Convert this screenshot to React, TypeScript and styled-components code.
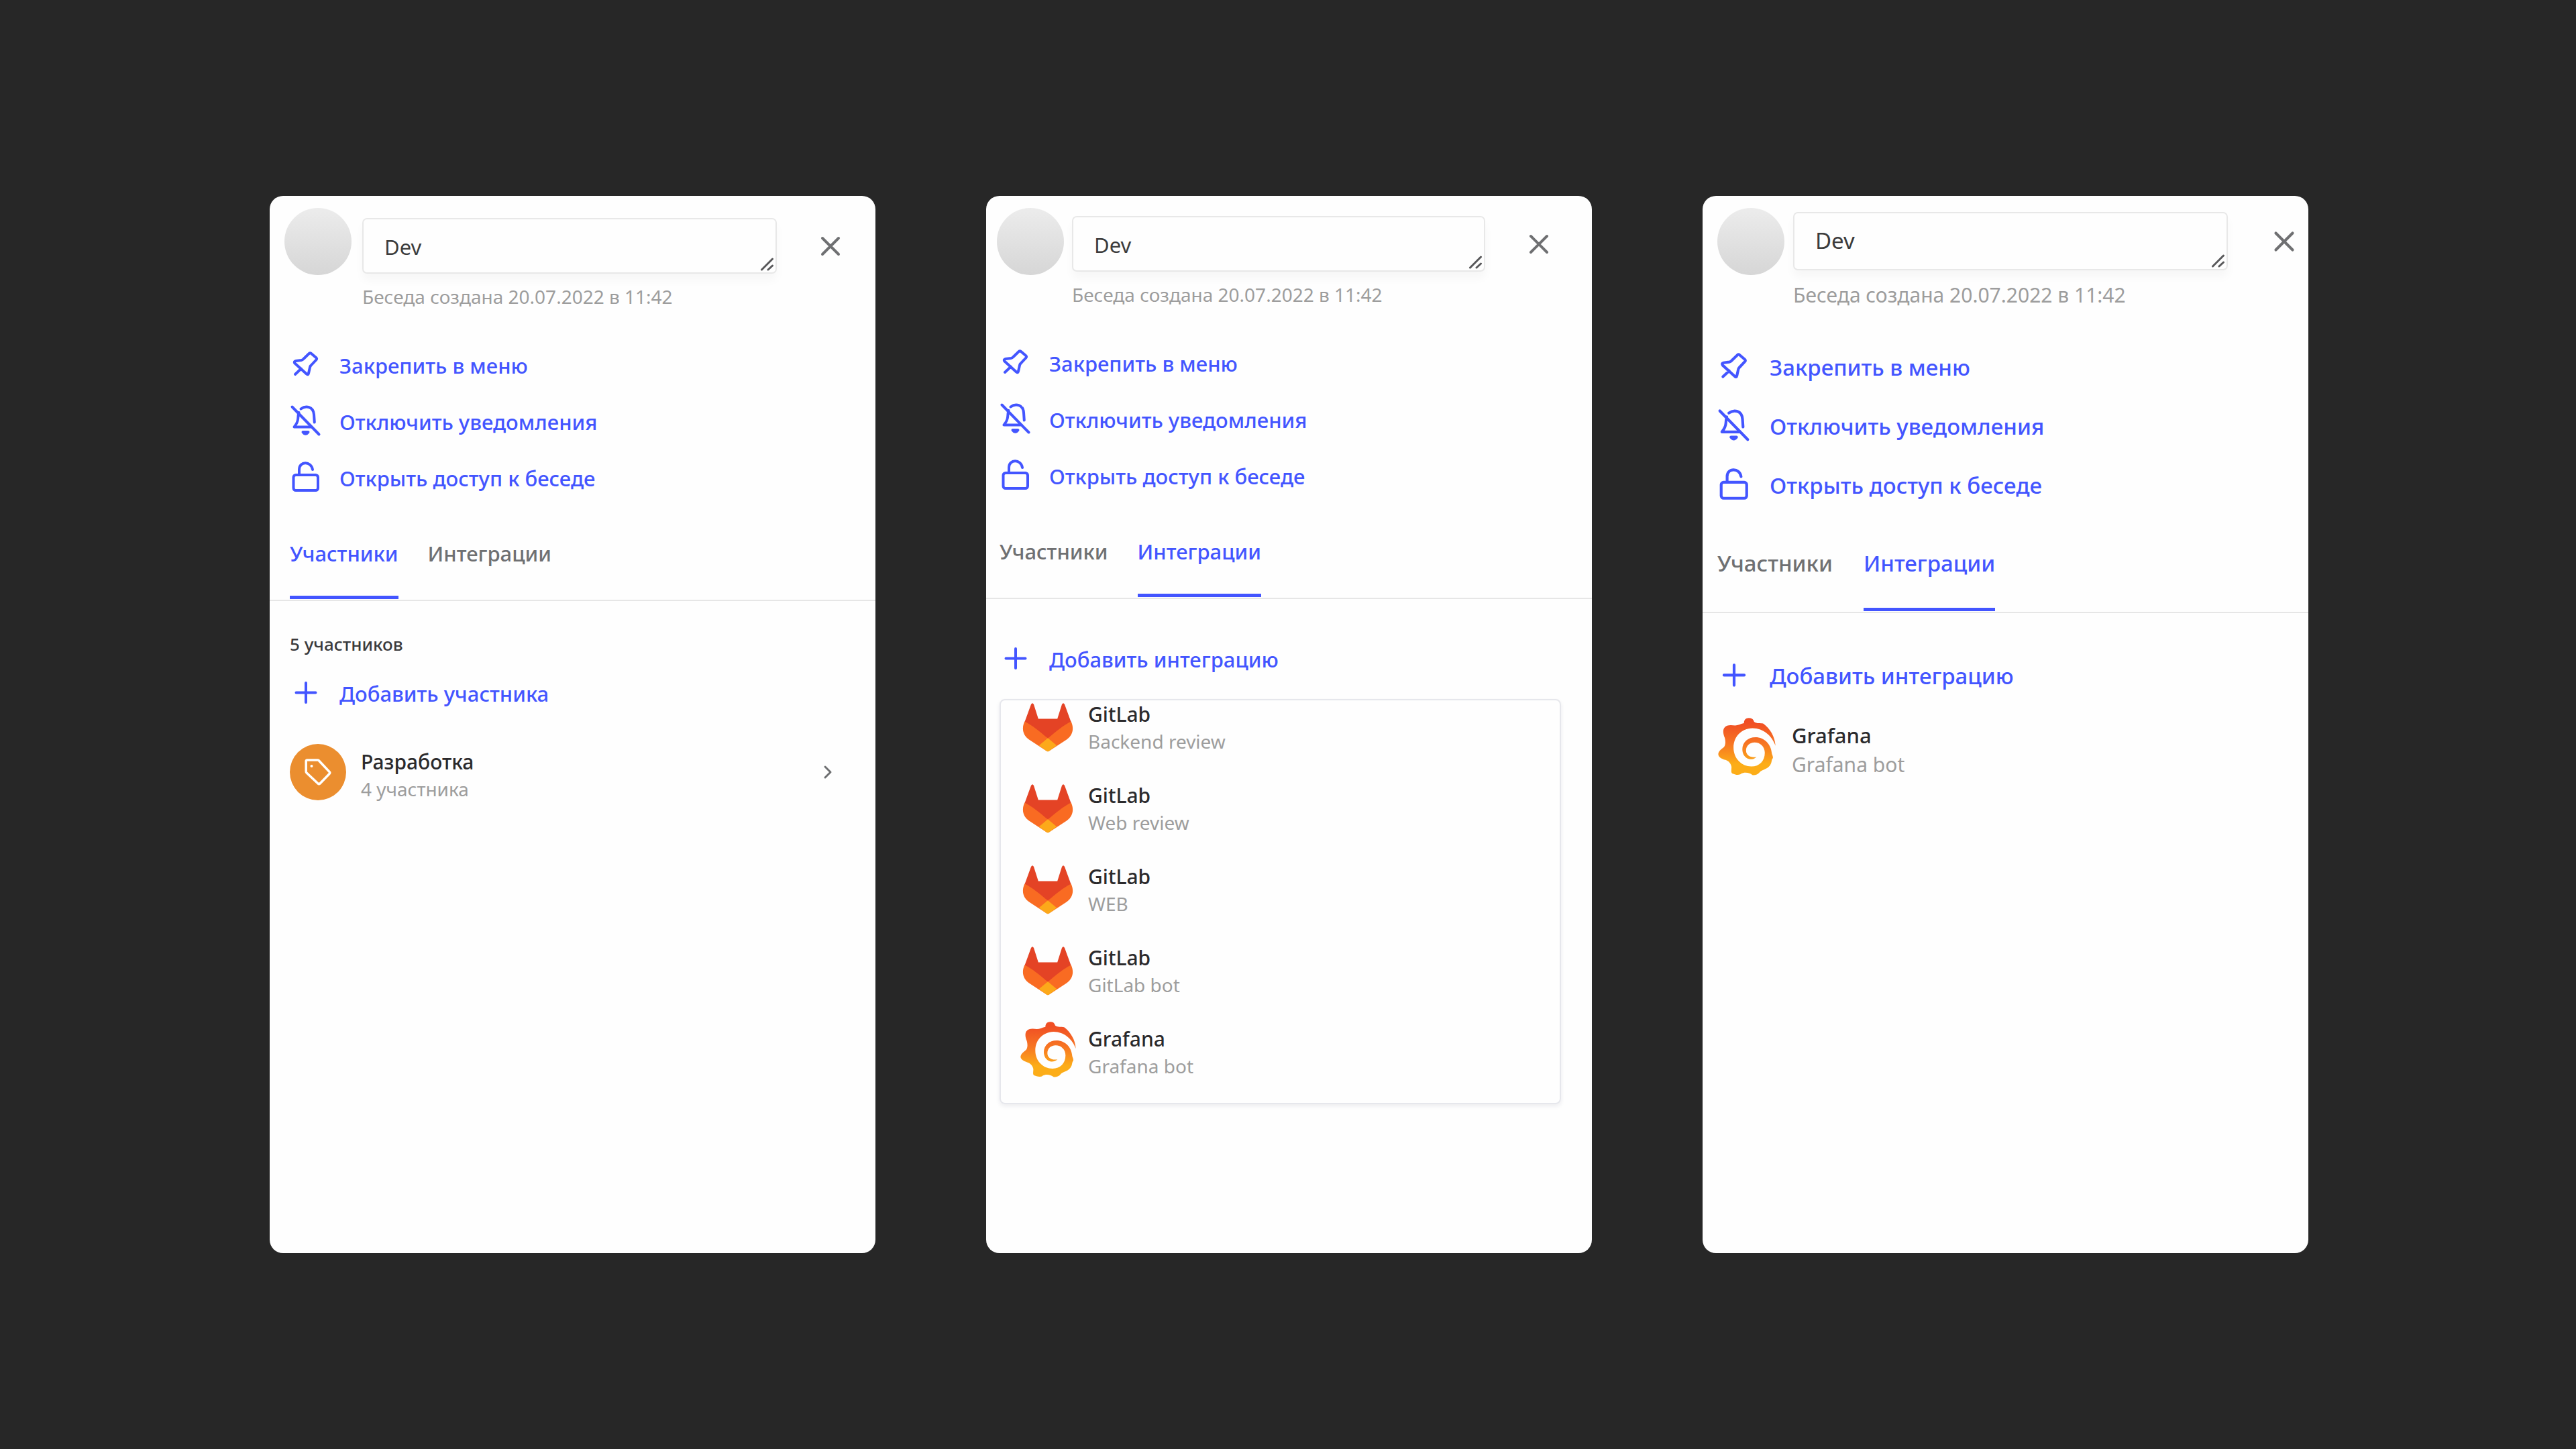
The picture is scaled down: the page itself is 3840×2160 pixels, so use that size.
import React, { useId, useState } from "react";
import styled, { createGlobalStyle, css, ThemeProvider } from "styled-components";

interface Metrics {
  base: number;
  title: number;
  small: number;
  count: number;
  row: number;
  line: number;
  icon: number;
  iconGap: number;
  logo: number;
  logoGap: number;
  inset: number;
  avatarInset: number;
  avatarGap: number;
  fieldTop: number;
  fieldHeight: number;
  closeGap: number;
  closeInset: number;
  dateGap: number;
  actionsTop: number;
  tabGap: number;
  tabTop: number;
  tabBottom: number;
  bodyTop: number;
  addGap: number;
}

declare module "styled-components" {
  export interface DefaultTheme extends Metrics {}
}

const compact: Metrics = {
  base: 31,
  title: 30,
  small: 28,
  count: 26,
  row: 84,
  line: 41,
  icon: 48,
  iconGap: 26,
  logo: 84,
  logoGap: 22,
  inset: 30,
  avatarInset: 22,
  avatarGap: 16,
  fieldTop: 15,
  fieldHeight: 83,
  closeGap: 56,
  closeInset: 43,
  dateGap: 14,
  actionsTop: 41,
  tabGap: 44,
  tabTop: 48,
  tabBottom: 41,
  bodyTop: 44,
  addGap: 39,
};

const withPicker: Metrics = {
  ...compact,
  logoGap: 18,
  inset: 20,
  avatarInset: 16,
  avatarGap: 12,
  fieldTop: 12,
  closeInset: 55,
  bodyTop: 48,
  addGap: 17,
};

const roomy: Metrics = {
  base: 33,
  title: 31,
  small: 30,
  count: 28,
  row: 88,
  line: 43,
  icon: 50,
  iconGap: 28,
  logo: 87,
  logoGap: 24,
  inset: 22,
  avatarInset: 22,
  avatarGap: 13,
  fieldTop: 6,
  fieldHeight: 87,
  closeGap: 59,
  closeInset: 11,
  dateGap: 17,
  actionsTop: 44,
  tabGap: 46,
  tabTop: 50,
  tabBottom: 44,
  bodyTop: 50,
  addGap: 23,
};

const blue = "#4355ff";
const ink = "#2b2a2c";
const grey = "#6f7072";
const pale = "#9d9d9d";

const GlobalStyle = createGlobalStyle`
  *, *::before, *::after { box-sizing: border-box; }
  body {
    margin: 0;
    background: #272727;
    font-family: "Noto Sans", "Open Sans", sans-serif;
  }
  button {
    margin: 0;
    padding: 0;
    border: 0;
    background: none;
    font: inherit;
    color: inherit;
    text-align: left;
    cursor: pointer;
  }
`;

const Page = styled.main`
  display: grid;
  grid-template-columns: repeat(3, minmax(0, 1fr));
  gap: 165px;
  min-height: 100vh;
  padding: 292px 399px 292px 402px;
`;

const Panel = styled.section`
  display: flex;
  flex-direction: column;
  border-radius: 20px;
  background: #fefefe;
`;

const Header = styled.header`
  display: flex;
  align-items: flex-start;
  gap: ${p => p.theme.avatarGap}px;
  padding: 18px ${p => p.theme.closeInset}px 0 ${p => p.theme.avatarInset}px;
`;

const Avatar = styled.div`
  flex: none;
  width: 100px;
  height: 100px;
  border-radius: 50%;
  background: linear-gradient(#ececec, #d6d6d6);
`;

const HeaderBody = styled.div`
  flex: 1;
  min-width: 0;
  padding-top: ${p => p.theme.fieldTop}px;
`;

const NameRow = styled.div`
  display: flex;
  align-items: center;
  gap: ${p => p.theme.closeGap}px;
`;

const Field = styled.div`
  position: relative;
  display: flex;
  flex: 1;
  height: ${p => p.theme.fieldHeight}px;
`;

const NameInput = styled.textarea`
  flex: 1;
  min-width: 0;
  margin: 0;
  padding: 20px 31px;
  border: 2px solid #e8e8e8;
  border-radius: 7px;
  outline: none;
  resize: none;
  overflow: hidden;
  background: #fefefe;
  box-shadow: 0 10px 14px rgba(0, 0, 0, 0.03);
  font: inherit;
  font-size: ${p => p.theme.base}px;
  line-height: 42px;
  color: #3c3c3c;
`;

const Grip = styled.svg`
  position: absolute;
  right: 4px;
  bottom: 4px;
  width: 24px;
  height: 24px;
  fill: none;
  stroke: #58585a;
  stroke-width: 3;
  stroke-linecap: round;
  pointer-events: none;
`;

const strokeIcon = css`
  display: block;
  flex: none;
  fill: none;
  stroke: currentColor;
  stroke-linecap: round;
  stroke-linejoin: round;
  overflow: visible;
`;

const Glyph = styled.svg`
  ${strokeIcon}
  width: ${p => p.theme.icon}px;
  height: ${p => p.theme.icon}px;
  stroke-width: 4;
`;

const CloseButton = styled.button`
  flex: none;
  color: ${grey};
`;

const Created = styled.p`
  margin: ${p => p.theme.dateGap}px 0 0;
  font-size: ${p => p.theme.small}px;
  line-height: 40px;
  color: ${pale};
  white-space: nowrap;
`;

const Actions = styled.div`
  display: flex;
  flex-direction: column;
  margin-top: ${p => p.theme.actionsTop}px;
  padding: 0 ${p => p.theme.inset}px;
`;

const ActionButton = styled.button`
  display: flex;
  align-items: center;
  align-self: flex-start;
  gap: ${p => p.theme.iconGap}px;
  height: ${p => p.theme.row}px;
  font-size: ${p => p.theme.base}px;
  font-weight: 500;
  line-height: 44px;
  color: ${blue};
  white-space: nowrap;
`;

const Tabs = styled.div`
  display: flex;
  gap: ${p => p.theme.tabGap}px;
  padding: ${p => p.theme.tabTop}px ${p => p.theme.inset}px 1px;
  border-bottom: 2px solid #e6e6e6;
`;

const Tab = styled.button<{ $active: boolean }>`
  padding-bottom: ${p => p.theme.tabBottom}px;
  border-bottom: 5px solid ${p => (p.$active ? blue : "transparent")};
  font-size: ${p => p.theme.base}px;
  font-weight: 500;
  line-height: 44px;
  color: ${p => (p.$active ? blue : grey)};
`;

const Body = styled.div`
  display: flex;
  flex-direction: column;
  padding: ${p => p.theme.bodyTop}px ${p => p.theme.inset}px 0;
`;

const Count = styled.p`
  margin: 0 0 12px;
  font-size: ${p => p.theme.count}px;
  font-weight: 500;
  line-height: 40px;
  color: #3a3a3c;
`;

const Entries = styled.ul`
  display: flex;
  flex-direction: column;
  gap: 39px;
  margin: ${p => p.theme.addGap}px 0 0;
  padding: 0;
  list-style: none;
`;

const PickerEntries = styled(Entries)`
  margin-right: 26px;
  padding: 0 28px 34px;
  border: 2px solid #e6e7ec;
  border-radius: 8px;
  box-shadow: 0 3px 6px rgba(20, 20, 60, 0.08);
`;

const EntryButton = styled.button`
  display: flex;
  align-items: flex-start;
  gap: ${p => p.theme.logoGap}px;
  width: 100%;
`;

const LogoSlot = styled.span`
  flex: none;
  width: ${p => p.theme.logo}px;
  height: ${p => p.theme.logo}px;
  margin: -6px 0 -4px;

  svg {
    display: block;
    width: 100%;
    height: 100%;
  }
`;

const GroupBadge = styled(LogoSlot)`
  border-radius: 50%;
  background: #eb8e2f;
  color: #fff;

  svg {
    ${strokeIcon}
    stroke-width: 3.5;
  }
`;

const EntryText = styled.span`
  display: flex;
  flex: 1;
  flex-direction: column;
  line-height: ${p => p.theme.line}px;
`;

const EntryTitle = styled.span`
  font-size: ${p => p.theme.title}px;
  font-weight: 500;
  color: ${ink};
`;

const EntryNote = styled.span`
  font-size: ${p => p.theme.small}px;
  color: ${pale};
`;

const Chevron = styled.svg`
  ${strokeIcon}
  width: 12px;
  height: 20px;
  margin: 26px 35px 0 0;
  stroke-width: 3;
  color: ${grey};
`;

const PinIcon = () => (
  <Glyph viewBox="0 0 48 48" aria-hidden="true">
    <path d="M8 37l9-8.500M7.500 20.500l17.500 16q2.500 2 3-1l2-9q.3-1.500 1.300-2.500l8-8.500q1.700-1.700 0-3.200L32 6q-1.700-1.500-3.300 0L20.500 14q-1.500 1.700-3.500 2l-8 1q-3.500.7-1.500 3.500z" />
  </Glyph>
);

const BellOffIcon = () => (
  <Glyph viewBox="0 0 48 48" aria-hidden="true">
    <path d="M3.500 1.500l40 41M16.500 4.500C24-1 35 1 36 13l.8 11.500M13.500 10q-1 3-1.300 9-.4 6-5.700 12.500H33" />
    <path d="M19.500 39q4 5.500 8 0z" fill="currentColor" />
  </Glyph>
);

const UnlockIcon = () => (
  <Glyph viewBox="0 0 48 48" aria-hidden="true">
    <rect x="5.500" y="19" width="36.500" height="23" rx="3.500" />
    <path d="M14 18.500V11c0-13 18-13 20 0" />
  </Glyph>
);

const PlusIcon = () => (
  <Glyph viewBox="0 0 48 48" aria-hidden="true">
    <path d="M24 8v29M9.500 22.500h29" />
  </Glyph>
);

const CloseIcon = () => (
  <Glyph viewBox="0 0 48 48" aria-hidden="true">
    <path d="M12 12l24 24M36 12L12 36" />
  </Glyph>
);

const TagIcon = () => (
  <svg viewBox="0 0 84 84" aria-hidden="true">
    <path d="M26 24h15.500q1 0 1.800.8L59 41.500q1.500 1.500 0 3L45 59q-1.500 1.500-3 0L25 43q-.8-.8-.8-2V26q0-2 1.800-2z" />
    <circle cx="32.500" cy="33" r="2" fill="currentColor" stroke="none" />
  </svg>
);

const GitLabLogo = () => (
  <svg viewBox="0 0 84 84" aria-hidden="true">
    <path fill="#e44325" d="M7.500 38L17 12q2-3.500 4 0l6.800 21.500h28.400L63 12q2-3.500 4 0l9.500 26L42 74z" />
    <path fill="#f96b22" d="M7.300 37.500C19 43 30 53 42 62.500 54 53 65 43 76.700 37.500c4.500 10 3 20-6.700 27L44 81.500q-2 1.600-4 0L14 64.500c-9.700-7-11.200-17-6.700-27z" />
    <path fill="#fca91a" d="M42 62.200l13.200 11L44 81.500q-2 1.600-4 0L28.800 73.200z" />
  </svg>
);

const GrafanaLogo = () => {
  const id = "grafana-" + useId().replace(/[^a-zA-Z0-9]/g, "");
  return (
    <svg viewBox="63 36 252 252" aria-hidden="true">
      <defs>
        <linearGradient id={id} x1="0" y1="0" x2="0" y2="1">
          <stop offset="0.08" stopColor="#f04e24" />
          <stop offset="0.45" stopColor="#f77523" />
          <stop offset="0.8" stopColor="#fcad18" />
        </linearGradient>
      </defs>
      <path
        fill={`url(#${id})`}
        d="M178 62C178 48 186 39 202 40C214 40 219 47 222 56C234 65 248 60 262 64C290 85 312 120 314 160C300 118 262 84 215 84C165 86 133 122 133 168C133 215 168 249 210 249C245 249 268 225 268 190C268 163 248 145 224 145C202 145 187 160 187 180C187 200 205 212 232 208C222 218 208 219 200 217C182 212 171 195 171 175C171 145 195 123 228 123C265 123 295 152 298 192C299 198 304 205 303 213C297 220 298 228 295 236C285 262 255 262 247 273C237 286 222 288 214 286C204 276 180 272 165 281C155 290 135 282 127 279C120 272 125 262 124 250C120 232 108 224 98 221C80 215 67 208 67 195C69 180 84 172 92 165C99 155 99 140 95 125C88 110 86 92 93 82C103 68 122 70 140 72C152 72 162 66 178 62Z"
      />
    </svg>
  );
};

type EntryKind = "group" | "gitlab" | "grafana";

interface EntryData {
  kind: EntryKind;
  title: string;
  note: string;
}

const Entry = ({ kind, title, note }: EntryData) => (
  <li>
    <EntryButton type="button">
      {kind === "group" && <GroupBadge><TagIcon /></GroupBadge>}
      {kind === "gitlab" && <LogoSlot><GitLabLogo /></LogoSlot>}
      {kind === "grafana" && <LogoSlot><GrafanaLogo /></LogoSlot>}
      <EntryText>
        <EntryTitle>{title}</EntryTitle>
        <EntryNote>{note}</EntryNote>
      </EntryText>
      {kind === "group" && (
        <Chevron viewBox="0 0 12 20" aria-hidden="true">
          <path d="M2 2l8 8-8 8" />
        </Chevron>
      )}
    </EntryButton>
  </li>
);

const tabNames = ["Участники", "Интеграции"];

interface ChatPanelProps {
  metrics: Metrics;
  tab: number;
  count?: string;
  addLabel: string;
  entries: EntryData[];
  picker?: boolean;
}

const ChatPanel = ({ metrics, tab, count, addLabel, entries, picker }: ChatPanelProps) => {
  const [name, setName] = useState("Dev");
  const List = picker ? PickerEntries : Entries;
  return (
    <ThemeProvider theme={metrics}>
      <Panel>
        <Header>
          <Avatar />
          <HeaderBody>
            <NameRow>
              <Field>
                <NameInput
                  aria-label="Название беседы"
                  rows={1}
                  value={name}
                  onChange={e => setName(e.target.value)}
                />
                <Grip viewBox="0 0 24 24" aria-hidden="true">
                  <path d="M5.500 22l16-16M15 22l6.500-6" />
                </Grip>
              </Field>
              <CloseButton type="button" aria-label="Закрыть">
                <CloseIcon />
              </CloseButton>
            </NameRow>
            <Created>Беседа создана 20.07.2022 в 11:42</Created>
          </HeaderBody>
        </Header>
        <Actions>
          <ActionButton type="button"><PinIcon />Закрепить в меню</ActionButton>
          <ActionButton type="button"><BellOffIcon />Отключить уведомления</ActionButton>
          <ActionButton type="button"><UnlockIcon />Открыть доступ к беседе</ActionButton>
        </Actions>
        <Tabs role="tablist">
          {tabNames.map((label, i) => (
            <Tab key={label} type="button" role="tab" aria-selected={i === tab} $active={i === tab}>
              {label}
            </Tab>
          ))}
        </Tabs>
        <Body>
          {count && <Count>{count}</Count>}
          <ActionButton type="button"><PlusIcon />{addLabel}</ActionButton>
          <List>
            {entries.map(entry => <Entry key={entry.title + entry.note} {...entry} />)}
          </List>
        </Body>
      </Panel>
    </ThemeProvider>
  );
};

const grafana: EntryData = { kind: "grafana", title: "Grafana", note: "Grafana bot" };

const integrations: EntryData[] = [
  { kind: "gitlab", title: "GitLab", note: "Backend review" },
  { kind: "gitlab", title: "GitLab", note: "Web review" },
  { kind: "gitlab", title: "GitLab", note: "WEB" },
  { kind: "gitlab", title: "GitLab", note: "GitLab bot" },
  grafana,
];

export default function App() {
  return (
    <>
      <GlobalStyle />
      <Page>
        <ChatPanel
          metrics={compact}
          tab={0}
          count="5 участников"
          addLabel="Добавить участника"
          entries={[{ kind: "group", title: "Разработка", note: "4 участника" }]}
        />
        <ChatPanel metrics={withPicker} tab={1} addLabel="Добавить интеграцию" entries={integrations} picker />
        <ChatPanel metrics={roomy} tab={1} addLabel="Добавить интеграцию" entries={[grafana]} />
      </Page>
    </>
  );
}
